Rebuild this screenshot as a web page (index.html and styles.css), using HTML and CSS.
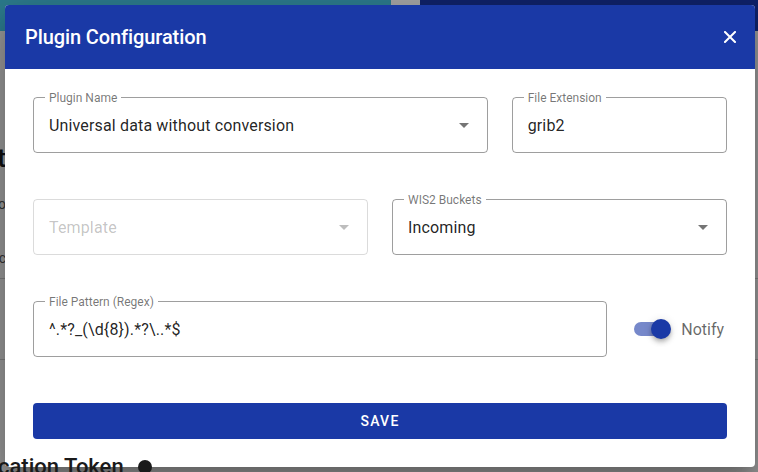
FILE: index.html
```html
<!DOCTYPE html>
<html lang="en">
<head>
<meta charset="utf-8">
<title>Plugin Configuration</title>
<link rel="stylesheet" href="styles.css">
</head>
<body>
<div class="page">
  <div class="topbar">
    <div class="tb-teal"></div>
    <div class="tb-gray"></div>
    <div class="tb-navy"></div>
  </div>
  <div class="page-body">
    <div class="edge heading"><span>Dataset</span></div>
    <div class="edge small s1"><span>Info</span></div>
    <div class="edge small s2"><span>Topic</span></div>
    <div class="rule r1"></div>
    <div class="rule r2"></div>
  </div>
</div>

<div class="dialog">
  <div class="dlg-head">
    <span class="dlg-title">Plugin Configuration</span>
    <svg class="close" width="12" height="12" viewBox="0 0 12 12"><path d="M1 1 L11 11 M11 1 L1 11" stroke="#fff" stroke-width="2" stroke-linecap="square"/></svg>
  </div>
  <div class="dlg-body">
    <div class="field span8">
      <span class="label">Plugin Name</span>
      <span class="value">Universal data without conversion</span>
      <span class="caret"></span>
    </div>
    <div class="field span4">
      <span class="label">File Extension</span>
      <span class="value">grib2</span>
    </div>
    <div class="field span6 disabled">
      <span class="value">Template</span>
      <span class="caret"></span>
    </div>
    <div class="field span6">
      <span class="label">WIS2 Buckets</span>
      <span class="value">Incoming</span>
      <span class="caret"></span>
    </div>
    <div class="field span10">
      <span class="label">File Pattern (Regex)</span>
      <span class="value">^.*?_(\d{8}).*?\..*$</span>
    </div>
    <div class="switch-wrap span2">
      <div class="track"><div class="thumb"></div></div>
      <span class="switch-label">Notify</span>
    </div>
    <button class="save">Save</button>
  </div>
</div>

<div class="peek">cation Token <span class="peek-icon"></span></div>
</body>
</html>
```

FILE: styles.css
```css
* { box-sizing: border-box; }

html, body {
  margin: 0;
  padding: 0;
  width: 758px;
  height: 472px;
  overflow: hidden;
}

body {
  background: #979797;
  font-family: Roboto, "Noto Sans", "Liberation Sans", sans-serif;
  position: relative;
}

.page {
  width: 758px;
  height: 472px;
  display: flex;
  flex-direction: column;
}

.topbar {
  height: 31px;
  display: flex;
}

.tb-teal { width: 391px; background: #2c7a8c; }
.tb-gray { width: 29px; background: #a3a3a3; height: 5px; }
.tb-navy { flex: 1; background: #10226a; }

.page-body {
  display: flex;
  flex-direction: column;
  flex: 1;
}

.edge {
  width: 6px;
  overflow: hidden;
  display: flex;
  justify-content: flex-end;
  white-space: nowrap;
  color: #111;
}

.heading {
  margin-top: 112px;
  font-size: 26px;
  font-weight: 500;
  line-height: 30px;
}

.small {
  font-size: 14px;
  line-height: 18px;
  color: #333;
}

.s1 { margin-top: 22px; }
.s2 { margin-top: 36px; }

.rule {
  height: 1px;
  background: #7c7c7c;
}

.r1 { margin-top: 11px; }
.r2 { margin-top: 80px; }

.dialog {
  position: absolute;
  left: 5px;
  top: 5px;
  width: 750px;
  height: 462px;
  background: #fff;
  border-radius: 4px;
  overflow: hidden;
  display: flex;
  flex-direction: column;
  box-shadow: 0 11px 15px -7px rgba(0,0,0,.2), 0 24px 38px 3px rgba(0,0,0,.14), 0 9px 46px 8px rgba(0,0,0,.12);
}

.dlg-head {
  height: 64px;
  flex: none;
  background: #1a39a6;
  color: #fff;
  display: flex;
  align-items: center;
  justify-content: space-between;
  padding: 0 19px 0 20px;
}

.dlg-title {
  font-size: 20px;
  font-weight: 500;
  letter-spacing: -0.1px;
}

.close { display: block; }

.dlg-body {
  padding: 28px;
  display: grid;
  grid-template-columns: repeat(12, 1fr);
  column-gap: 24px;
  row-gap: 46px;
}

.span2 { grid-column: span 2; }
.span4 { grid-column: span 4; }
.span6 { grid-column: span 6; }
.span8 { grid-column: span 8; }
.span10 { grid-column: span 10; }

.field {
  height: 56px;
  border: 1px solid rgba(0,0,0,.38);
  border-radius: 4px;
  position: relative;
  display: flex;
  align-items: center;
  padding: 0 15px;
  font-size: 16px;
  color: rgba(0,0,0,.87);
}

.label {
  position: absolute;
  top: -8px;
  left: 11px;
  padding: 0 4px;
  background: #fff;
  font-size: 12px;
  line-height: 16px;
  color: rgba(0,0,0,.55);
}

.value { white-space: nowrap; letter-spacing: 0.15px; }

.caret {
  margin-left: auto;
  margin-right: 3px;
  width: 0;
  height: 0;
  border-left: 5px solid transparent;
  border-right: 5px solid transparent;
  border-top: 5px solid rgba(0,0,0,.54);
}

.field.disabled {
  border-color: rgba(0,0,0,.14);
  color: rgba(0,0,0,.24);
}

.field.disabled .caret {
  border-top-color: rgba(0,0,0,.26);
}

.switch-wrap {
  display: flex;
  align-items: center;
  padding-left: 3px;
}

.track {
  position: relative;
  width: 36px;
  height: 14px;
  border-radius: 7px;
  background: rgba(26,57,166,.6);
}

.thumb {
  position: absolute;
  left: 17px;
  top: -3px;
  width: 20px;
  height: 20px;
  border-radius: 50%;
  background: #1a39a6;
  box-shadow: 0 2px 4px -1px rgba(0,0,0,.2), 0 4px 5px 0 rgba(0,0,0,.14), 0 1px 10px 0 rgba(0,0,0,.12);
}

.switch-label {
  margin-left: 11px;
  font-size: 16px;
  color: rgba(0,0,0,.6);
}

.save {
  grid-column: 1 / -1;
  height: 36px;
  border: none;
  border-radius: 4px;
  background: #1a39a6;
  color: #fff;
  font-family: Roboto, "Noto Sans", "Liberation Sans", sans-serif;
  font-size: 14px;
  font-weight: 500;
  letter-spacing: 1.25px;
  text-transform: uppercase;
  padding: 0;
}

.peek {
  position: absolute;
  left: -2px;
  top: 454px;
  font-size: 22px;
  font-weight: 500;
  color: #1a1a1a;
  white-space: nowrap;
  display: flex;
  align-items: center;
  gap: 14px;
}

.peek-icon {
  width: 14px;
  height: 14px;
  border-radius: 50%;
  background: #1a1a1a;
}
```
